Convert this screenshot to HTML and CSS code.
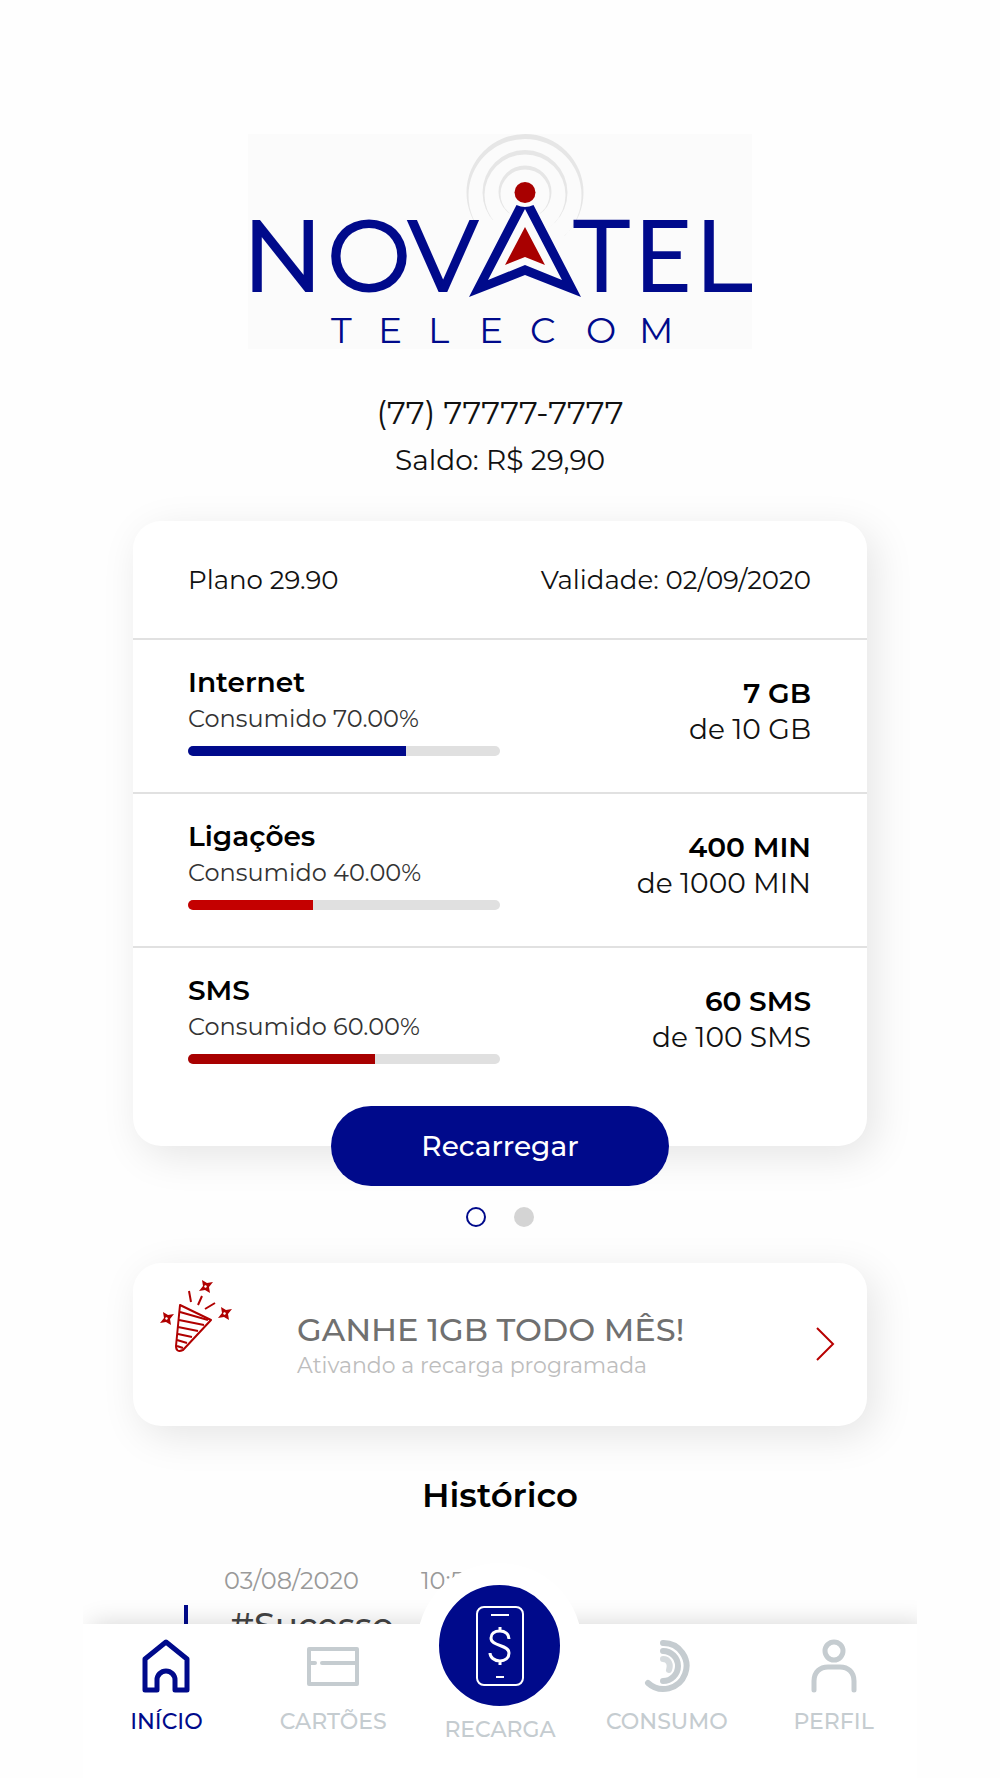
FILE: index.html
```html
<!DOCTYPE html>
<html lang="pt-BR">

<head>
    <meta charset="utf-8">
    <meta name="viewport" content="width=device-width, initial-scale=1.0">
    <title>Novatel Telecom</title>

    <link rel="stylesheet" href="styles.css">
</head>

<body>
    <div class="app">
        <main>
            <header>
                <svg class="logo" viewBox="0 0 504 215" role="img" aria-label="Novatel Telecom">
                    <defs>
                        <clipPath id="ondas">
                            <path d="M210 0h134v68h-36l-10 20h-42l-10-20h-36z M210 60h42l0 26h-42z M302 60h42v42h-42z" />
                        </clipPath>
                    </defs>
                    <rect width="504" height="215" fill="#fbfbfb" />
                    <!-- ondas -->
                    <g fill="#e6e6e6" fill-rule="evenodd" clip-path="url(#ondas)">
                        <path d="M218.500 58.500a58.500 58.500 0 1 1 117 0a58.500 58.500 0 1 1 -117 0z M220.500 61.500a56.500 56.500 0 1 0 113 0a56.500 56.500 0 1 0 -113 0z" />
                        <path d="M234.500 58.500a42.500 42.500 0 1 1 85 0a42.500 42.500 0 1 1 -85 0z M236.500 61a40.500 40.500 0 1 0 81 0a40.500 40.500 0 1 0 -81 0z" />
                        <path d="M250.500 58a26.500 26.500 0 1 1 53 0a26.500 26.500 0 1 1 -53 0z M252.500 60a24.500 24.500 0 1 0 49 0a24.500 24.500 0 1 0 -49 0z" />
                    </g>
                    <path d="M268 68h18l16 32h-50z" fill="#fbfbfb" />
                    <!-- antena -->
                    <circle cx="277" cy="58.500" r="10.500" fill="#a80000" />
                    <path d="M268.500 71q8.500 4 17 0L333 163l-56-22l-56 22z M277 75l-37 71l37-15l37 15z" fill="#000a8b" fill-rule="evenodd" />
                    <path d="M277 93l20 38l-20-8l-20 8z" fill="#a80000" />
                    <text class="nome" y="157" x="-6 79 160">NOV</text>
                    <text class="nome estreito" y="158" x="324 386">TE</text>
                    <text class="nome" y="157" x="446">L</text>
                    <text class="sub" y="209" x="83 130 180 231 282 338 391">TELECOM</text>
                </svg>
                <h1>(77) 77777-7777</h1>
                <p class="saldo">Saldo: R$ 29,90</p>
            </header>

            <section class="card plano">
                <div class="plano_topo">
                    <span>Plano 29.90</span>
                    <span>Validade: 02/09/2020</span>
                </div>

                <div class="linha">
                    <div class="consumo">
                        <h2>Internet</h2>
                        <p>Consumido 70.00%</p>
                        <div class="barra"><div class="azul" style="width: 70%"></div></div>
                    </div>
                    <div class="total">
                        <strong>7 GB</strong>
                        <span>de 10 GB</span>
                    </div>
                </div>

                <div class="linha">
                    <div class="consumo">
                        <h2>Ligações</h2>
                        <p>Consumido 40.00%</p>
                        <div class="barra"><div class="vermelho" style="width: 40%"></div></div>
                    </div>
                    <div class="total">
                        <strong>400 MIN</strong>
                        <span>de 1000 MIN</span>
                    </div>
                </div>

                <div class="linha">
                    <div class="consumo">
                        <h2>SMS</h2>
                        <p>Consumido 60.00%</p>
                        <div class="barra"><div class="vinho" style="width: 60%"></div></div>
                    </div>
                    <div class="total">
                        <strong>60 SMS</strong>
                        <span>de 100 SMS</span>
                    </div>
                </div>

                <button class="recarregar">Recarregar</button>
            </section>

            <div class="pontos">
                <button class="ponto ativo" aria-label="Plano 1"></button>
                <button class="ponto" aria-label="Plano 2"></button>
            </div>

            <a href="#" class="card promo">
                <svg class="festa" viewBox="0 0 74 76" fill="none" stroke="#b00000" stroke-width="2">
                    <path d="M21 26L52 41L24 71Q17 74 17 67z" stroke-linejoin="round" />
                    <path d="M21 33l28 8M20 41l25 5M19 48l20 4M19 55l14 3M18 61l10 3M18 67l6 2" />
                    <path d="M30 12l2 11M43 17l-4 9M56 24l-10 6" />
                    <path d="M43 1l5 3l6-1l-4 5l1 6l-5-3l-6 1l4-5z M46 6l-1 2l2 1l1-2z" fill="#b00000" fill-rule="evenodd" stroke="none" />
                    <path d="M4 33l5 3l6-1l-4 5l1 6l-5-3l-6 1l4-5z M7 38l-1 2l2 1l1-2z" fill="#b00000" fill-rule="evenodd" stroke="none" />
                    <path d="M62 28l5 3l6-1l-4 5l1 6l-5-3l-6 1l4-5z M65 33l-1 2l2 1l1-2z" fill="#b00000" fill-rule="evenodd" stroke="none" />
                </svg>
                <span class="promo_texto">
                    <span class="promo_titulo">GANHE 1GB TODO MÊS!</span>
                    <span class="promo_sub">Ativando a recarga programada</span>
                </span>
                <svg class="seta" viewBox="0 0 20 34" fill="none" stroke="#b80000" stroke-width="2">
                    <path d="M1 1l16 16l-16 16" />
                </svg>
            </a>

            <section class="historico">
                <h2>Histórico</h2>
                <article>
                    <div class="data"><span>03/08/2020</span><span>10:57</span></div>
                    <h3>#Sucesso</h3>
                </article>
            </section>
        </main>

        <nav>
            <a href="#" class="valgt">
                <svg width="48" height="54" viewBox="0 0 48 54" fill="none" stroke="currentColor" stroke-width="5" stroke-linejoin="round">
                    <path d="M24 3L45 20v31H33V41a9 9 0 0 0-18 0v10H3V20z" />
                </svg>
                INÍCIO
            </a>
            <a href="#">
                <svg width="54" height="54" viewBox="0 0 54 54" fill="none" stroke="currentColor" stroke-width="4" stroke-linejoin="round" stroke-linecap="round">
                    <path d="M3 10h48v35H3zM3 24h6M16 24h34" />
                </svg>
                CARTÕES
            </a>
            <a href="#" class="recarga">
                <span class="bola">
                    <svg width="50" height="82" viewBox="0 0 50 82" fill="none" stroke="#fff" stroke-width="2">
                        <rect x="2" y="2" width="46" height="78" rx="7" />
                        <path d="M16 10h18M21 72h8" />
                        <path d="M34 34c0-5-4-8-9-8c-6 0-9 3-9 7c0 9 18 6 18 15c0 5-4 8-9 8c-6 0-10-4-10-8M25 22v4M25 56v4" stroke-width="3" />
                    </svg>
                </span>
                RECARGA
            </a>
            <a href="#">
                <svg width="48" height="54" viewBox="0 0 48 54" fill="none" stroke="currentColor" stroke-width="6" stroke-linecap="round">
                    <path d="M20 4a23 23 0 1 1-15 40" />
                    <path d="M20 12a15 15 0 0 1 0 30" />
                    <path d="M20 20c6 0 8 6 6 11" opacity=".7" />
                </svg>
                CONSUMO
            </a>
            <a href="#">
                <svg width="46" height="54" viewBox="0 0 46 54" fill="none" stroke="currentColor" stroke-width="5" stroke-linecap="round">
                    <circle cx="23" cy="12" r="9" />
                    <path d="M3 51V42C3 33 9 28 17 28h12c8 0 14 5 14 14v9" />
                </svg>
                PERFIL
            </a>
        </nav>
    </div>
</body>

</html>
```
FILE: styles.css
```css
* {
    box-sizing: border-box;
}

body {
    margin: 0;
    background-color: #fefefe;
    font-family: 'Montserrat', 'Inter', sans-serif;
    color: #111;
}

h1,
h2,
h3,
p {
    margin: 0;
    font-weight: 400;
}

a {
    text-decoration: none;
}

button {
    border: none;
    padding: 0;
    font-family: inherit;
    cursor: pointer;
}

.app {
    display: flex;
    flex-direction: column;
    align-items: center;
    height: 100vh;
}

main {
    flex: 1;
    min-height: 0;
    width: 100%;
    padding: 134px 40px 0;
    overflow-y: auto;
    scrollbar-width: none;
    display: flex;
    flex-direction: column;
    align-items: center;
}

main > * {
    flex-shrink: 0;
}

header {
    width: 100%;
    text-align: center;
}

.logo {
    display: block;
    width: 100%;
    max-width: 504px;
    margin: 0 auto;
}

.nome {
    font-size: 100px;
    font-weight: 400;
    fill: #000a8b;
    stroke: #000a8b;
    stroke-width: 2px;
}

.estreito {
    font-family: 'Lato', sans-serif;
    stroke: none;
}

.sub {
    font-size: 36px;
    font-weight: 400;
    fill: #000a8b;
}

h1 {
    margin-top: 40px;
    font-size: 32px;
    line-height: 48px;
}

.saldo {
    font-size: 28px;
    line-height: 46px;
}

.card {
    width: 100%;
    max-width: 734px;
    background-color: #fff;
    border-radius: 28px;
    box-shadow: 8px 10px 40px rgba(0, 0, 0, 0.1);
}

.plano {
    margin-top: 38px;
    display: flex;
    flex-direction: column;
    align-items: center;
}

.plano_topo,
.linha {
    width: 100%;
    display: flex;
    justify-content: space-between;
    padding: 0 56px 0 55px;
}

.plano_topo {
    height: 117px;
    align-items: center;
    font-size: 26px;
}

.linha {
    height: 154px;
    border-top: 2px solid #e1e1e1;
    padding-top: 24px;
}

.consumo {
    width: 312px;
}

.consumo h2 {
    font-size: 28px;
    line-height: 36px;
    font-weight: 600;
    color: #000;
}

.consumo p {
    font-size: 24px;
    line-height: 38px;
    color: #333;
}

.barra {
    height: 10px;
    margin-top: 8px;
    border-radius: 5px;
    background-color: #e0e0e0;
    overflow: hidden;
}

.barra div {
    height: 100%;
}

.azul {
    background-color: #000a8b;
}

.vermelho {
    background-color: #c40000;
}

.vinho {
    background-color: #a80000;
}

.total {
    display: flex;
    flex-direction: column;
    padding-top: 11px;
    text-align: right;
    font-size: 28px;
    line-height: 36px;
}

.total strong {
    font-weight: 600;
    color: #000;
}

.recarregar {
    width: 338px;
    height: 80px;
    margin: 6px 0 -40px;
    border-radius: 40px;
    background-color: #000a8b;
    color: #fff;
    font-size: 28px;
    font-weight: 500;
}

.pontos {
    display: flex;
    gap: 28px;
    margin-top: 61px;
}

.ponto {
    width: 20px;
    height: 20px;
    border-radius: 50%;
    background-color: #d4d4d4;
}

.ponto.ativo {
    background-color: #fff;
    border: 2px solid #000a8b;
}

.promo {
    display: flex;
    height: 163px;
    margin-top: 36px;
    padding: 16px 31px 0 26px;
}

.festa {
    width: 74px;
    height: 76px;
}

.promo_texto {
    display: flex;
    flex-direction: column;
    flex: 1;
    margin-left: 64px;
    padding-top: 32px;
}

.promo_titulo {
    font-size: 32px;
    line-height: 38px;
    font-weight: 500;
    color: #707070;
}

.promo_sub {
    font-size: 22px;
    line-height: 34px;
    color: #bdbdbd;
}

.seta {
    width: 20px;
    height: 34px;
    margin-top: 48px;
}

.historico {
    width: 100%;
    max-width: 734px;
    margin-top: 47px;
}

.historico h2 {
    font-size: 34px;
    line-height: 44px;
    font-weight: 600;
    text-align: center;
    color: #000;
}

article {
    margin-top: 46px;
    padding-left: 51px;
}

.data {
    display: flex;
    gap: 62px;
    padding-left: 40px;
    font-size: 24px;
    line-height: 36px;
    color: #999;
}

h3 {
    height: 120px;
    margin-top: 6px;
    padding-left: 42px;
    border-left: 4px solid #000a8b;
    font-size: 34px;
    line-height: 40px;
    font-weight: 500;
    color: #444;
}

nav {
    position: relative;
    display: flex;
    width: 100%;
    max-width: 834px;
    height: 154px;
    padding-top: 15px;
    background-color: #fff;
    box-shadow: 8px 0 24px rgba(0, 0, 0, 0.16);
    clip-path: inset(-80px 0 0 0);
}

nav a {
    flex: 1;
    display: flex;
    flex-direction: column;
    align-items: center;
    gap: 14px;
    font-size: 22px;
    line-height: 30px;
    font-weight: 500;
    color: #c5ccd0;
}

nav a.valgt {
    color: #000a8b;
}

.bola {
    display: flex;
    align-items: center;
    justify-content: center;
    width: 165px;
    height: 165px;
    margin: -76px 0 -27px;
    border: 22px solid #fff;
    border-radius: 50%;
    background-color: #000a8b;
}
```
